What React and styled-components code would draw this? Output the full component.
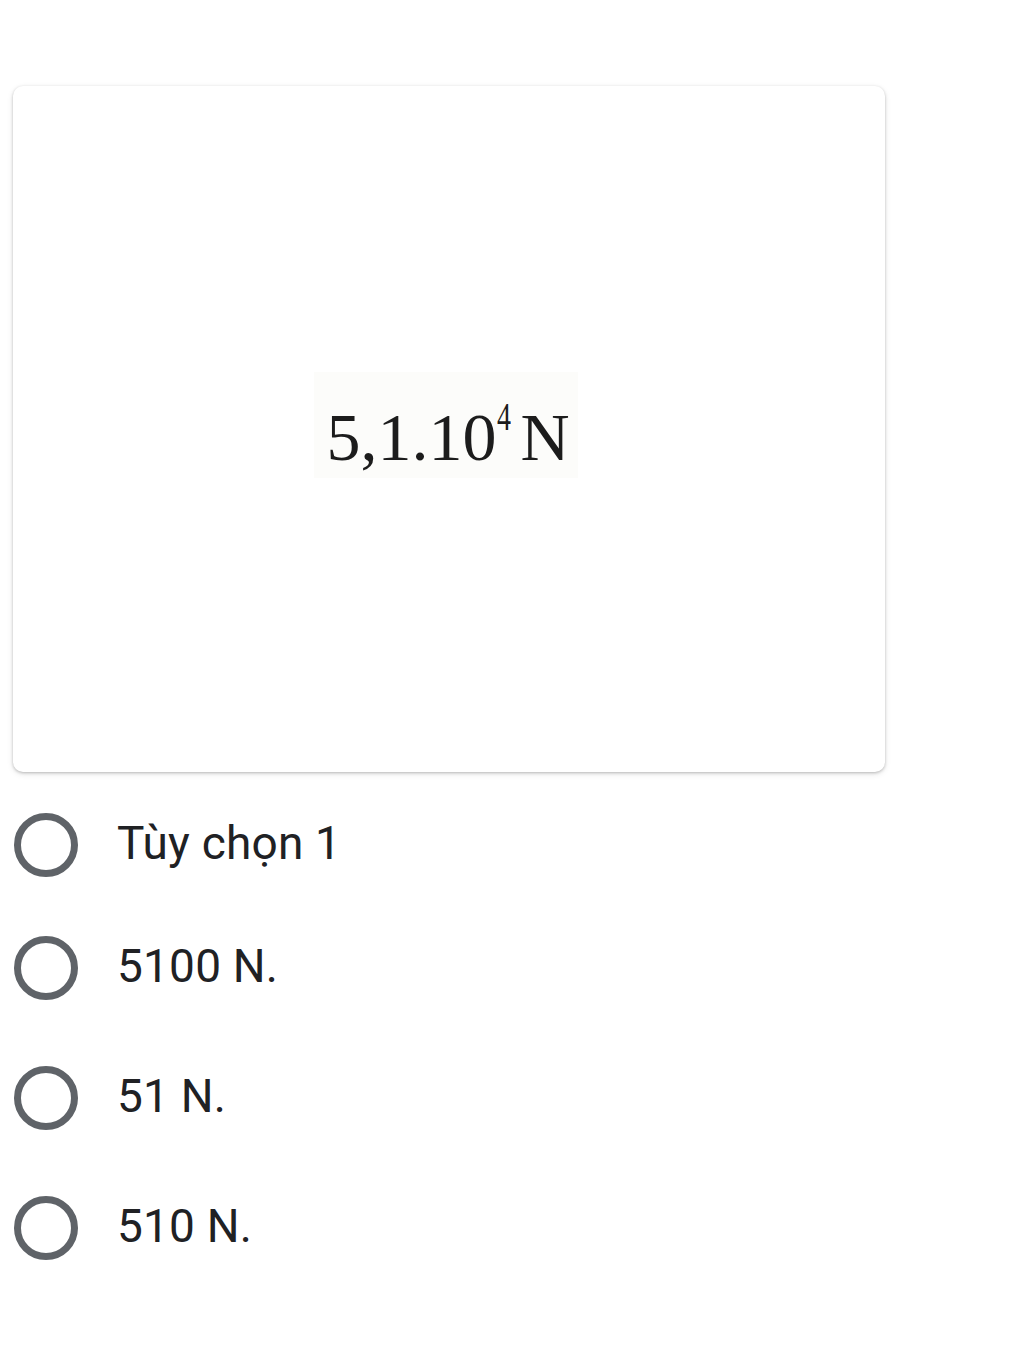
import React from "react";
import styled, { createGlobalStyle } from "styled-components";

const Global = createGlobalStyle`
  html, body { margin: 0; padding: 0; background: #ffffff; }
  body { font-family: Roboto, "Noto Sans", Arial, sans-serif; }
`;

const Page = styled.div`
  width: 1024px;
  min-height: 1357px;
  padding-top: 86px;
  box-sizing: border-box;
`;

const Card = styled.div`
  margin-left: 13px;
  width: 872px;
  height: 686px;
  border-radius: 10px;
  background: #fff;
  box-shadow: 0 1px 3px rgba(0,0,0,0.22), 0 2px 6px rgba(0,0,0,0.10);
  display: flex;
  align-items: center;
  justify-content: center;
`;

const Formula = styled.div`
  margin-bottom: 8px;
  margin-right: 6px;
  padding: 31px 8px 7px 12px;
  background: #fcfcfa;
  font-family: "Liberation Serif", "Times New Roman", serif;
  font-size: 68px;
  color: #1c1c1c;
  line-height: 1;
  white-space: nowrap;
`;

const Sup = styled.span`
  font-size: 40px;
  vertical-align: 30px;
  line-height: 0;
  margin-right: 8px;
  margin-left: 1px;
  display: inline-block;
  transform: scaleX(0.7);
  transform-origin: left center;
  width: 15px;
`;

const List = styled.div`
  margin-top: 13px;
  display: flex;
  flex-direction: column;
`;

const Row = styled.label`
  height: 130px;
  display: flex;
  align-items: center;
  padding-left: 14px;
  gap: 39px;
  &:first-child { height: 116px; }
`;

const Radio = styled.span`
  width: 64px;
  height: 64px;
  box-sizing: border-box;
  border: 7px solid #5f6368;
  border-radius: 50%;
  flex: none;
  margin-top: 4px;
`;

const Label = styled.span`
  font-size: 46px;
  color: #202124;
  letter-spacing: 0.2px;
`;

const options = ["Tùy chọn 1", "5100 N.", "51 N.", "510 N."];

export default function App() {
  return (
    <Page>
      <Global />
      <Card>
        <Formula>
          5,1.10<Sup>4</Sup>N
        </Formula>
      </Card>
      <List>
        {options.map((o) => (
          <Row key={o}>
            <Radio />
            <Label>{o}</Label>
          </Row>
        ))}
      </List>
    </Page>
  );
}
